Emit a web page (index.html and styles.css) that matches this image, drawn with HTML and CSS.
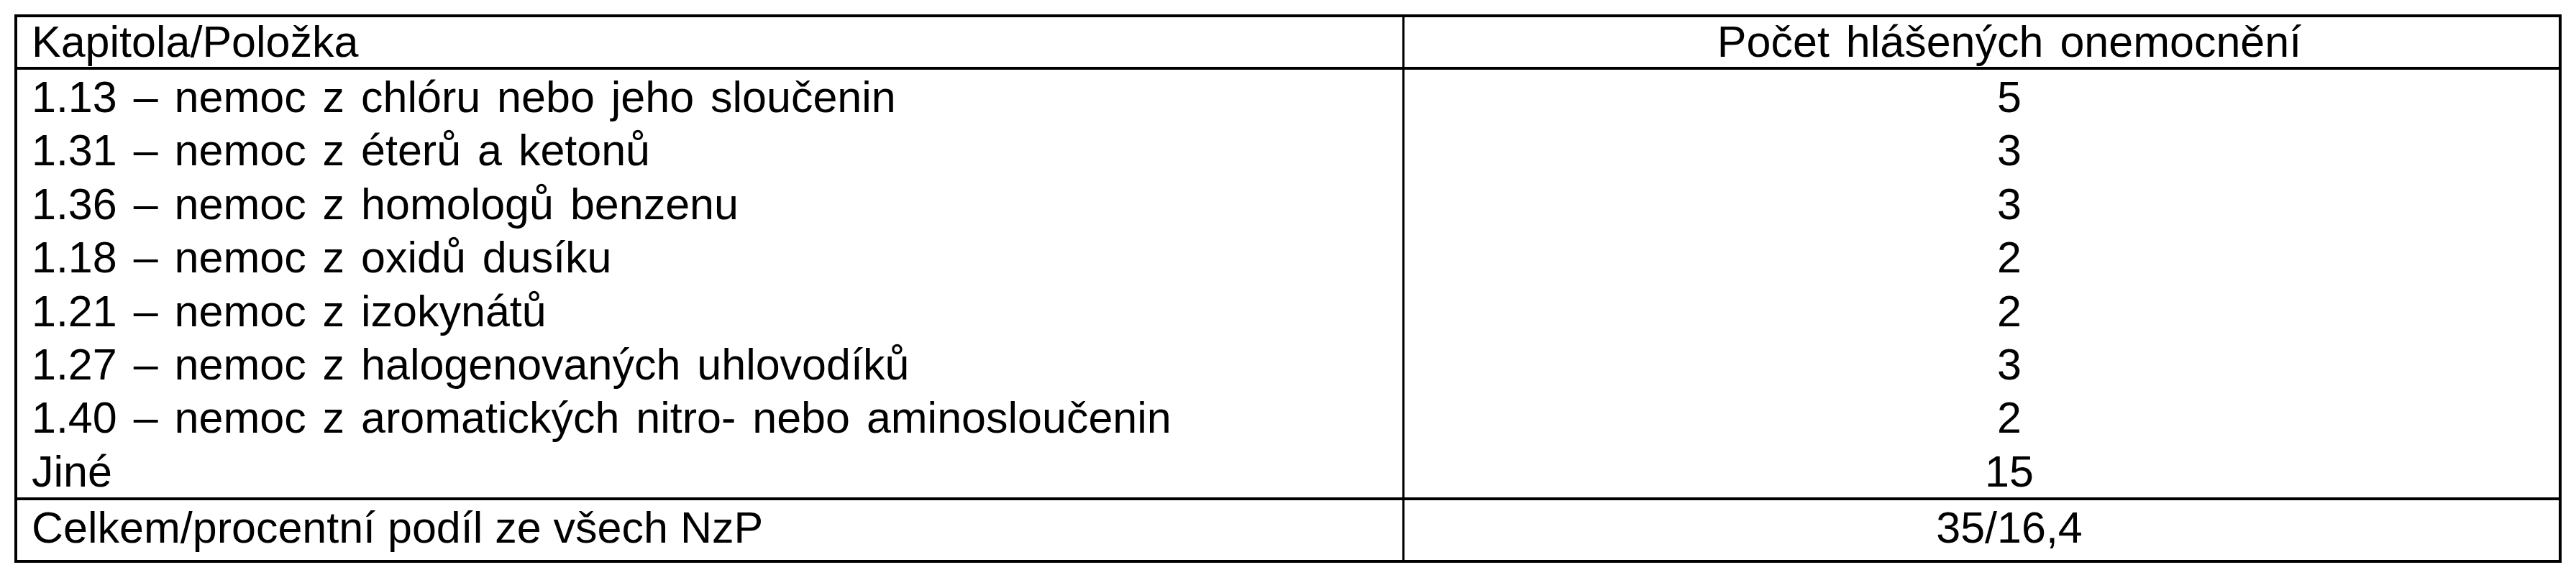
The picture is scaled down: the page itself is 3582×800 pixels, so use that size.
FILE: index.html
```html
<!DOCTYPE html>
<html lang="cs">
<head>
<meta charset="utf-8">
<title>Kapitola/Položka</title>
<link rel="stylesheet" href="styles.css">
</head>
<body>
<table class="tbl">
  <colgroup>
    <col class="col-a">
    <col class="col-b">
  </colgroup>
  <thead>
    <tr class="head">
      <th class="lbl">Kapitola/Položka</th>
      <th class="num">Počet hlášených onemocnění</th>
    </tr>
  </thead>
  <tbody>
    <tr class="row"><td class="lbl">1.13 – nemoc z chlóru nebo jeho sloučenin</td><td class="num">5</td></tr>
    <tr class="row"><td class="lbl">1.31 – nemoc z éterů a ketonů</td><td class="num">3</td></tr>
    <tr class="row"><td class="lbl">1.36 – nemoc z homologů benzenu</td><td class="num">3</td></tr>
    <tr class="row"><td class="lbl">1.18 – nemoc z oxidů dusíku</td><td class="num">2</td></tr>
    <tr class="row"><td class="lbl">1.21 – nemoc z izokynátů</td><td class="num">2</td></tr>
    <tr class="row"><td class="lbl">1.27 – nemoc z halogenovaných uhlovodíků</td><td class="num">3</td></tr>
    <tr class="row"><td class="lbl">1.40 – nemoc z aromatických nitro- nebo aminosloučenin</td><td class="num">2</td></tr>
    <tr class="row"><td class="lbl">Jiné</td><td class="num">15</td></tr>
  </tbody>
  <tfoot>
    <tr class="total">
      <td class="lbl">Celkem/procentní podíl ze všech NzP</td>
      <td class="num">35/16,4</td>
    </tr>
  </tfoot>
</table>
</body>
</html>
```

FILE: styles.css
```css
html, body {
  margin: 0;
  padding: 0;
  background: #ffffff;
}

body {
  padding: 20px 20px 0 20px;
}

.tbl {
  border-collapse: separate;
  border-spacing: 0;
  border: 4px solid #000;
  width: 3542px;
  table-layout: fixed;
  font-family: "Liberation Sans", Arial, sans-serif;
  font-size: 61px;
  font-weight: normal;
  word-spacing: 6px;
  color: #000;
}

.col-a {
  width: 1929px;
}

.tbl th,
.tbl td {
  font-weight: normal;
  white-space: nowrap;
  padding: 0;
  vertical-align: top;
}

.lbl {
  text-align: left;
  padding-left: 20px !important;
  border-right: 3px solid #000;
}

.num {
  text-align: center;
  padding-left: 77px !important;
}

.head th {
  line-height: 69px;
  border-bottom: 4px solid #000;
}

.row td {
  padding-top: 2px !important;
  line-height: 72.4px;
}

.total td {
  border-top: 4px solid #000;
  padding-top: 1px !important;
  padding-bottom: 8px !important;
  line-height: 74px;
  word-spacing: 0;
}
```
